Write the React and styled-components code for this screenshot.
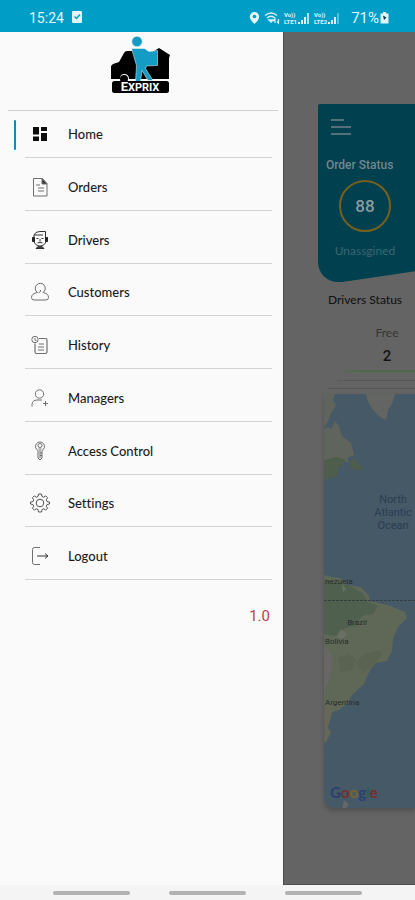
import * as React from "react";
import styled, { createGlobalStyle } from "styled-components";

const menu = [
  { label: "Home", icon: HomeIcon },
  { label: "Orders", icon: OrdersIcon },
  { label: "Drivers", icon: DriversIcon },
  { label: "Customers", icon: CustomersIcon },
  { label: "History", icon: HistoryIcon },
  { label: "Managers", icon: ManagersIcon },
  { label: "Access Control", icon: AccessIcon },
  { label: "Settings", icon: SettingsIcon },
  { label: "Logout", icon: LogoutIcon },
];

export default function App() {
  return (
    <>
      <GlobalStyle />
      <Screen>
        <StatusBar>
          <StatusGroup>
            <span>15:24</span>
            <TaskIcon />
          </StatusGroup>
          <StatusGroup>
            <PinIcon />
            <WifiIcon />
            <Sim name="LTE1" />
            <Sim name="LTE2" weak />
            <Battery>
              71%
              <BatteryIcon />
            </Battery>
          </StatusGroup>
        </StatusBar>
        <Body>
          <Drawer>
            <LogoArea>
              <Logo />
            </LogoArea>
            <Menu>
              {menu.map(({ label, icon: Icon }, index) => (
                <MenuRow key={label}>
                  <Marker $active={index === 0} />
                  <MenuLink href="#">
                    <Icon />
                    {label}
                  </MenuLink>
                </MenuRow>
              ))}
            </Menu>
            <Version>1.0</Version>
          </Drawer>
          <Page>
            <Dashboard />
          </Page>
        </Body>
        <NavBar>
          <NavButton aria-label="Recent apps" />
          <NavButton aria-label="Home screen" />
          <NavButton aria-label="Back" />
        </NavBar>
      </Screen>
    </>
  );
}

function Dashboard() {
  return (
    <>
      <OrderPanel>
        <Hamburger aria-label="Menu">
          <HamburgerLine $short />
          <HamburgerLine />
          <HamburgerLine />
        </Hamburger>
        <OrderTitle>Order Status</OrderTitle>
        <OrderStat>
          <Ring>88</Ring>
          <StatName>Unassgined</StatName>
        </OrderStat>
      </OrderPanel>
      <DriversPanel>
        <DriversTitle>Drivers Status</DriversTitle>
        <DriverStat>
          <DriverState>Free</DriverState>
          <DriverCount>2</DriverCount>
        </DriverStat>
        <GreenLine />
        <ShadowLine />
        <ShadowLine $wide />
      </DriversPanel>
      <MapCard>
        <WorldMap />
      </MapCard>
    </>
  );
}

function Sim({ name, weak }) {
  return (
    <SimBox>
      <SimText>
        <span>Vo))</span>
        <span>{name}</span>
      </SimText>
      <svg width="12" height="12" viewBox="0 0 12 12" fill="#d9f1f8">
        <path d="M0 10h2v2H0zM3 8h2v4H3zM6 5h2v7H6z" />
        <path d="M9 1h2v11H9z" opacity={weak ? 0.4 : 0.8} />
      </svg>
    </SimBox>
  );
}

function TaskIcon() {
  return (
    <svg width="10" height="14" viewBox="0 0 10 14">
      <rect width="10" height="12" rx="1" fill="#e2f5fa" />
      <path d="M2.5 5.5l2 2 3.5-4" fill="none" stroke="#009dc7" strokeWidth="1.4" />
    </svg>
  );
}

function PinIcon() {
  return (
    <svg width="11" height="14" viewBox="0 0 11 14">
      <path
        d="M5.5 1A4.7 4.7 0 0 0 .8 5.7C.8 9 5.5 13 5.5 13s4.7-4 4.7-7.3A4.7 4.7 0 0 0 5.5 1z"
        fill="#e8f7fb"
      />
      <circle cx="5.5" cy="5.5" r="1.8" fill="#009dc7" />
    </svg>
  );
}

function WifiIcon() {
  return (
    <svg width="16" height="14" viewBox="0 0 16 14" fill="none" stroke="#d9f1f8" strokeWidth="1.4">
      <path d="M1 4.5Q7-.5 13 4.500M3 7q4-3.500 8 0" />
      <path d="M5 9l2 2 2-2z" fill="#d9f1f8" />
      <path d="M9 10l2-2v4M14.500 8v4L13 10.500" strokeWidth="1.2" />
    </svg>
  );
}

function BatteryIcon() {
  return (
    <svg width="9" height="13" viewBox="0 0 9 13">
      <path d="M3 1h3v1.500h2.500v10h-8v-10H3z" fill="#e2f5fa" />
      <path d="M3 4.500l3.500 2L4 9z" fill="#123b47" />
    </svg>
  );
}

function Logo() {
  return (
    <svg width="60" height="58" viewBox="0 0 60 58" role="img" aria-label="Exprix">
      <path
        d="M0 43V30l2-2 6-2 5-9q1-2 3-2h6l3 2h15l8-5 11 7-1 3v21H18q0-5-5-5-4 0-4 5z"
        fill="#000"
      />
      <circle cx="13" cy="43" r="4" fill="#000" />
      <g fill="#149cc4" stroke="#fafafa" strokeWidth="0.5">
        <circle cx="26" cy="5.5" r="5.2" />
        <path d="M20.500 12.500h13l4.500 3 8.500-1v15l-11 .5-1 2.500 7.500 12h-5l-6-10-1.500 11h-5l1-16z" />
      </g>
      <rect x="1" y="45" width="57" height="12" rx="2.500" fill="#000" />
      <text
        x="29"
        y="55"
        textAnchor="middle"
        fill="#fff"
        fontFamily="Roboto, sans-serif"
        fontWeight="700"
      >
        <tspan fontSize="13">E</tspan>
        <tspan fontSize="11">XPRIX</tspan>
      </text>
    </svg>
  );
}

function HomeIcon() {
  return (
    <svg width="20" height="20" viewBox="0 0 20 20" fill="#0d0d0d">
      <path d="M3 3h6v7.500H3zM11 3h6v4h-6zM3 12.500h6V17H3zM11 9h6v8h-6z" />
    </svg>
  );
}

function OrdersIcon() {
  return (
    <IconBase>
      <path d="M3.500 1.500h9l4.500 5v12.500H3.500z" />
      <path d="M12 1.500V7h5z" fill="#333" />
      <path d="M6 8h4M8 11h6M8 14h6" />
    </IconBase>
  );
}

function DriversIcon() {
  return (
    <IconBase>
      <path d="M4 8V5q1-3.500 6-3.500h5.500V8M4 5h9" stroke="#333" />
      <path d="M4 8v3q1 5 6 5t6-5V8" stroke="#333" />
      <path d="M2.500 7.500h2v4h-2zM15.500 7.500h2v4h-2z" fill="#222" stroke="#222" />
      <path d="M6.500 8.500h2M11.500 8.500h2M10 9v2.500M7.500 13q2.500-1.500 5 0" stroke="#333" />
      <path d="M6 18.500l2-2h4l2 2z" fill="#444" stroke="#333" />
    </IconBase>
  );
}

function CustomersIcon() {
  return (
    <IconBase>
      <path d="M8.500 11l2-1.500V8M7.500 10.500A5 5 0 1 1 13 10.500q5.500 1 5.500 5 0 2.500-2.500 2.500H4Q1.500 18 1.500 15.500q0-4 6-5z" />
    </IconBase>
  );
}

function HistoryIcon() {
  return (
    <IconBase>
      <path d="M9 3.500h6.500q1.500 0 1.500 1.500v12q0 1.500-1.500 1.500h-9Q5 18.500 5 17V8.500" strokeWidth="1.2" />
      <circle cx="5" cy="4.5" r="3.2" />
      <path d="M5 3v2l1.500.5M9 9h5M8 12h6M8 15h6" />
    </IconBase>
  );
}

function ManagersIcon() {
  return (
    <IconBase>
      <circle cx="9.5" cy="6" r="4.2" />
      <path d="M2 18.500v-2Q2.500 12 7 12h5M13 15.500h5M15.500 13v5" />
    </IconBase>
  );
}

function AccessIcon() {
  return (
    <IconBase>
      <path d="M8 9.500A4.500 4.500 0 1 1 12 9.500V17l-2 2-2-2z" />
      <circle cx="10" cy="4.5" r="2" />
      <path d="M8.500 8h3M10 9v8M10 12h2M10 14.500h2" />
    </IconBase>
  );
}

function SettingsIcon() {
  return (
    <IconBase>
      <path
        d="M8.500 1h3l.5 2.500 1.700.7 2-1.300 1.900 1.900-1.300 2 .7 1.700 2.500.5v2l-2.500.5-.7 1.700 1.300 2-1.900 1.900-2-1.300-1.700.7-.5 2.500h-3L8 16.500l-1.700-.7-2 1.300-1.900-1.900 1.300-2L3 11.500.5 11V9L3 8.500l.7-1.700-1.300-2 1.900-1.900 2 1.300L8 3.500z"
        stroke="#555"
      />
      <circle cx="10" cy="10" r="3.8" stroke="#555" />
    </IconBase>
  );
}

function LogoutIcon() {
  return (
    <IconBase>
      <path d="M10 1.500H4.500Q2.500 1.500 2.500 3.500v13q0 2 2 2H10" />
      <path d="M7 10h11M15 7.500l3 2.500-3 2.500" stroke="#333" />
    </IconBase>
  );
}

function IconBase({ children }) {
  return (
    <svg
      width="20"
      height="20"
      viewBox="0 0 20 20"
      fill="none"
      stroke="#6f6f6f"
      strokeWidth="1"
      strokeLinejoin="round"
    >
      {children}
    </svg>
  );
}

function WorldMap() {
  return (
    <MapSvg viewBox="0 0 91 414" preserveAspectRatio="xMinYMin slice" role="img" aria-label="Map">
      <rect width="91" height="414" fill="#455967" />
      <g fill="#5f655c">
        <path d="M0 0h11l-2 6 3 5-5 8-3 9-4 5z" />
        <path d="M42 0h29l-3 10-4 6-2 10-6-3-7-7-5-8z" fill="#626562" />
        <path d="M0 35l4-2 3 2 4-8 4 5 3 10 9 7 3 12-7 3 2 5-8-3-8 3-9 7z" />
      </g>
      <path d="M0 66l12-3 9 2-2 5-4 3-2 9-13 4zM26 68l4-4 5 6 5 6-12-1z" fill="#4f5d4c" />
      <path
        d="M0 181l8 2 8 1 7 7 14 2 8 9 1 5 18 4 17 7 2 6-9 9-5 12-1 12-5 10-12 2-6 9-5 12-12 11-4 8-9 7-9 3-5 10-1 9-2 7-1 9 4 6-8 3z"
        fill="#5f6856"
      />
      <path d="M0 185l26 7 12 7 6 9 10 4-5 8-11 2-7 10-10 2-9 8-12-2z" fill="#50604e" />
      <path d="M40 260l14-4 4 4-10 14-10 5-6-10zM14 264l10-5 8 6-4 11-12 2z" fill="#5a6352" />
      <path d="M0 253l5 3 4 12-4 18-5 12z" fill="#686765" />
      <path d="M18 190l4 5-3 3zM17 235l6 5-4 5-7-2z" fill="#687066" />
      <path d="M1 310l8-4-1 13-4 15 3 4-5 10H0z" fill="#656859" />
      <path d="M18 414l2-8 5 4-3 4z" fill="#65666a" />
      <path d="M0 206.500h91" stroke="#353e44" strokeWidth="1" strokeDasharray="3 1" />
      <g fontFamily="Roboto, sans-serif" fill="#292d2a" fontSize="8">
        <text x="1" y="190">nezuela</text>
        <text x="33" y="231" textAnchor="middle">
          Brazil
        </text>
        <text x="1" y="250">Bolivia</text>
        <text x="1" y="311">Argentina</text>
      </g>
      <g fontFamily="Roboto, sans-serif" fill="#293e50" fontSize="11" textAnchor="middle">
        <text x="69" y="109">North</text>
        <text x="69" y="122">Atlantic</text>
        <text x="69" y="135">Ocean</text>
      </g>
      <text x="6" y="404" fontFamily="Lato, sans-serif" fontSize="15" fontWeight="700">
        <tspan fill="#2a4170">G</tspan>
        <tspan fill="#7a2c2e">o</tspan>
        <tspan fill="#7c6526">o</tspan>
        <tspan fill="#2a4170">g</tspan>
        <tspan fill="#2f5f45">l</tspan>
        <tspan fill="#7a2c2e">e</tspan>
      </text>
    </MapSvg>
  );
}

const GlobalStyle = createGlobalStyle`
  * {
    box-sizing: border-box;
  }

  body {
    margin: 0;
    font-family: Lato, "Open Sans", sans-serif;
    font-variant-ligatures: none;
    background: #fafafa;
  }
`;

const Screen = styled.div`
  display: flex;
  flex-direction: column;
  min-height: 100vh;
`;

const StatusBar = styled.header`
  display: flex;
  align-items: center;
  justify-content: space-between;
  height: 32px;
  padding: 3px 26px 0 29px;
  background: #009dc7;
  color: #e2f5fa;
  font: 14px Roboto, sans-serif;
`;

const StatusGroup = styled.div`
  display: flex;
  align-items: center;
  gap: 8px;

  & + & {
    gap: 4px;
  }
`;

const SimBox = styled.div`
  display: flex;
  align-items: center;
  gap: 1px;
`;

const SimText = styled.div`
  display: flex;
  flex-direction: column;
  font-size: 6px;
  font-weight: 700;
  line-height: 7px;
`;

const Battery = styled.span`
  display: flex;
  align-items: center;
  gap: 1px;
  margin-left: 7px;
  font-size: 15px;
`;

const Body = styled.div`
  display: grid;
  grid-template-columns: 15fr 7fr;
  flex: 1;
`;

const Drawer = styled.aside`
  display: flex;
  flex-direction: column;
  background: #fafafa;
`;

const LogoArea = styled.div`
  display: flex;
  justify-content: center;
  margin: 0 5px 0 8px;
  padding: 4px 4px 16px 0;
  border-bottom: 1px solid #d0d0d0;
`;

const Menu = styled.nav`
  display: flex;
  flex-direction: column;
  justify-content: space-between;
  min-height: 469px;
  padding: 0 11px 0 14px;
`;

const MenuRow = styled.div`
  display: flex;
  align-items: center;
  height: 47px;
`;

const Marker = styled.span`
  width: 2px;
  height: 30px;
  border-radius: 1px;
  background: ${(props) => (props.$active ? "#1489b5" : "transparent")};
`;

const MenuLink = styled.a`
  display: flex;
  align-items: center;
  flex: 1;
  gap: 18px;
  height: 100%;
  margin-left: 9px;
  padding-left: 5px;
  border-bottom: 1px solid #d3d3d3;
  color: #1c1c1c;
  font-size: 13px;
  font-weight: 500;
  text-decoration: none;
`;

const Version = styled.p`
  margin: 26px 13px 0;
  color: #c03a50;
  font: 15px/20px Roboto, sans-serif;
  text-align: right;
`;

const Page = styled.main`
  display: flex;
  flex-direction: column;
  min-width: 0;
  padding: 72px 0 0 34px;
  background: #646464;
  border-left: 1px solid #4c4c4c;
  border-bottom: 1px solid #4c4c4c;
`;

const OrderPanel = styled.section`
  height: 178px;
  padding: 15px 0 0 8px;
  border-radius: 2px 0 0 20px;
  background: #00404f;
  clip-path: polygon(0 0, 100% 0, 100% 94%, 25% 100%, 0 100%);
`;

const Hamburger = styled.button`
  display: flex;
  flex-direction: column;
  gap: 5px;
  width: 30px;
  padding: 0 5px;
  border: 0;
  background: none;
`;

const HamburgerLine = styled.span`
  width: ${(props) => (props.$short ? "13px" : "20px")};
  height: 2px;
  background: #53717b;
`;

const OrderTitle = styled.h2`
  margin: 21px 0 0;
  color: #70878f;
  font: 500 12px/18px Roboto, sans-serif;
`;

const OrderStat = styled.div`
  display: flex;
  flex-direction: column;
  align-items: center;
  width: 78px;
  padding-top: 6px;
`;

const Ring = styled.div`
  display: grid;
  place-items: center;
  width: 52px;
  height: 52px;
  border: 2px solid #75601e;
  border-radius: 50%;
  color: #8a9ba1;
  font: 500 17px Roboto, sans-serif;
`;

const StatName = styled.span`
  margin-top: 10px;
  color: #3f6673;
  font-size: 12px;
  line-height: 18px;
`;

const DriversPanel = styled.section`
  padding: 9px 0 5px 10px;
`;

const DriversTitle = styled.h2`
  margin: 0;
  color: #141414;
  font-size: 12px;
  font-weight: 500;
  line-height: 18px;
`;

const DriverStat = styled.div`
  display: flex;
  flex-direction: column;
  align-items: center;
  margin-left: 18px;
  padding-top: 14px;
  width: 82px;
`;

const DriverState = styled.span`
  color: #363636;
  font-size: 12px;
  line-height: 20px;
`;

const DriverCount = styled.strong`
  color: #141414;
  font: 500 15px/26px Roboto, sans-serif;
`;

const GreenLine = styled.div`
  height: 2px;
  margin: 1px 0 8px 14px;
  background: linear-gradient(to right, #646464, #4f6b4b 16px);
`;

const ShadowLine = styled.div`
  height: 1px;
  margin: 0 0 7px ${(props) => (props.$wide ? "0" : "9px")};
  background: #585858;

  &:last-child {
    margin-bottom: 0;
  }
`;

const MapCard = styled.section`
  height: 414px;
  margin-left: 6px;
  border-radius: 0 0 0 10px;
  overflow: hidden;
  box-shadow: 0 3px 4px #505050;
`;

const MapSvg = styled.svg`
  display: block;
  width: 100%;
  height: 100%;
`;

const NavBar = styled.footer`
  display: flex;
  align-items: center;
  justify-content: center;
  gap: 39px;
  height: 15px;
  background: #f4f4f4;
`;

const NavButton = styled.button`
  width: 77px;
  height: 4px;
  padding: 0;
  border: 0;
  border-radius: 2px;
  background: #b2b2b2;
`;
